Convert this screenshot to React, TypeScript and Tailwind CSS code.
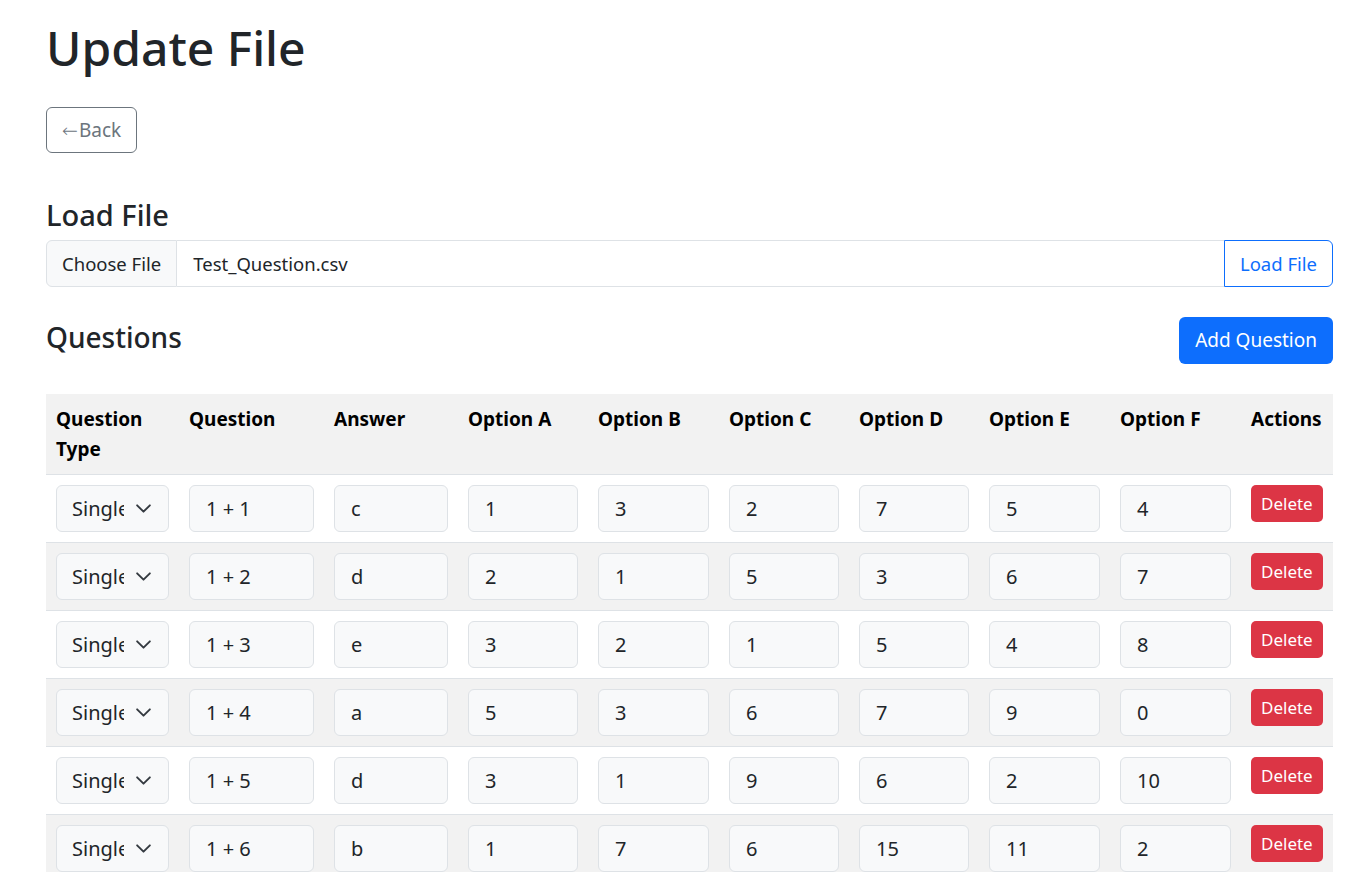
import React from "react";

type Row = {
	q: string;
	ans: string;
	opts: string[];
};

const rows: Row[] = [
	{ q: "1 + 1", ans: "c", opts: ["1", "3", "2", "7", "5", "4"] },
	{ q: "1 + 2", ans: "d", opts: ["2", "1", "5", "3", "6", "7"] },
	{ q: "1 + 3", ans: "e", opts: ["3", "2", "1", "5", "4", "8"] },
	{ q: "1 + 4", ans: "a", opts: ["5", "3", "6", "7", "9", "0"] },
	{ q: "1 + 5", ans: "d", opts: ["3", "1", "9", "6", "2", "10"] },
	{ q: "1 + 6", ans: "b", opts: ["1", "7", "6", "15", "11", "2"] },
];

const headers = ["Question Type", "Question", "Answer", "Option A", "Option B", "Option C", "Option D", "Option E", "Option F", "Actions"];
const widths = [133, 145, 134, 130, 131, 130, 130, 131, 131, 92];

const Field: React.FC<{ value: string }> = ({ value }) => (
	<div className="h-[47px] w-full rounded-[6px] border border-[#dee2e6] bg-[#f8f9fa] px-[16px] flex items-center text-[20px] text-[#212529]">
		{value}
	</div>
);

const TypeSelect: React.FC = () => (
	<div className="relative h-[47px] w-full rounded-[6px] border border-[#dee2e6] bg-[#f8f9fa] pl-[15px] flex items-center text-[20px] text-[#212529]">
		<span className="block w-[52px] overflow-hidden whitespace-nowrap">Single</span>
		<svg className="absolute right-[16px] top-[16px]" width="17" height="13" viewBox="0 0 16 12" fill="none">
			<path d="M2 3l6 6 6-6" stroke="#343a40" strokeWidth="1.8" strokeLinecap="round" strokeLinejoin="round" />
		</svg>
	</div>
);

export default function App() {
	return (
		<div className="min-h-screen bg-white text-[#212529] font-['Noto_Sans','Liberation_Sans',sans-serif]">
			<div className="pl-[46px] pr-[24px] pt-[19px]">
				<h1 className="text-[48px] font-medium leading-[58px]">Update File</h1>
				<button className="mt-[30px] h-[46px] px-[15px] rounded-[6px] border border-[#6c757d] text-[#6c757d] text-[19px] flex items-center">
					<span className="font-['DejaVu_Sans',sans-serif] font-light text-[19px] leading-none mr-[1px]">←</span>Back
				</button>

				<h3 className="mt-[44px] text-[29px] font-medium leading-[35px]">Load File</h3>
				<div className="mt-[8px] flex h-[47px] text-[18.5px]">
					<div className="flex items-center px-[15px] bg-[#f8f9fa] border border-[#dee2e6] rounded-l-[6px] text-[#212529]">Choose File</div>
					<div className="flex-1 flex items-center px-[16px] border-y border-[#dee2e6]">Test_Question.csv</div>
					<button className="flex items-center px-[15px] border border-[#0d6efd] text-[#0d6efd] rounded-r-[6px]">Load File</button>
				</div>

				<div className="mt-[30px] flex items-start justify-between">
					<h3 className="mt-[3px] text-[28px] font-medium leading-[35px]">Questions</h3>
					<button className="h-[47px] px-[16px] rounded-[6px] bg-[#0d6efd] text-white text-[19px]">Add Question</button>
				</div>

				<table className="mt-[30px] w-full table-fixed border-collapse text-[19px]">
					<colgroup>
						{widths.map((w, i) => (
							<col key={i} style={{ width: w }} />
						))}
					</colgroup>
					<thead>
						<tr className="bg-[#f2f2f2] border-b border-[#dee2e6]">
							{headers.map((h) => (
								<th key={h} className="p-[10px] text-left align-top font-bold leading-[30px] text-black">
									{h}
								</th>
							))}
						</tr>
					</thead>
					<tbody>
						{rows.map((r, i) => (
							<tr key={i} className={`border-b border-[#dee2e6] ${i % 2 === 1 ? "bg-[#f2f2f2]" : "bg-white"}`}>
								<td className="p-[10px] align-top">
									<TypeSelect />
								</td>
								<td className="p-[10px] align-top">
									<Field value={r.q} />
								</td>
								<td className="p-[10px] align-top">
									<Field value={r.ans} />
								</td>
								{r.opts.map((o, j) => (
									<td key={j} className="p-[10px] align-top">
										<Field value={o} />
									</td>
								))}
								<td className="p-[10px] align-top">
									<button className="h-[37px] px-[10px] rounded-[5px] bg-[#dc3545] text-white text-[17px]">Delete</button>
								</td>
							</tr>
						))}
					</tbody>
				</table>
			</div>
		</div>
	);
}
